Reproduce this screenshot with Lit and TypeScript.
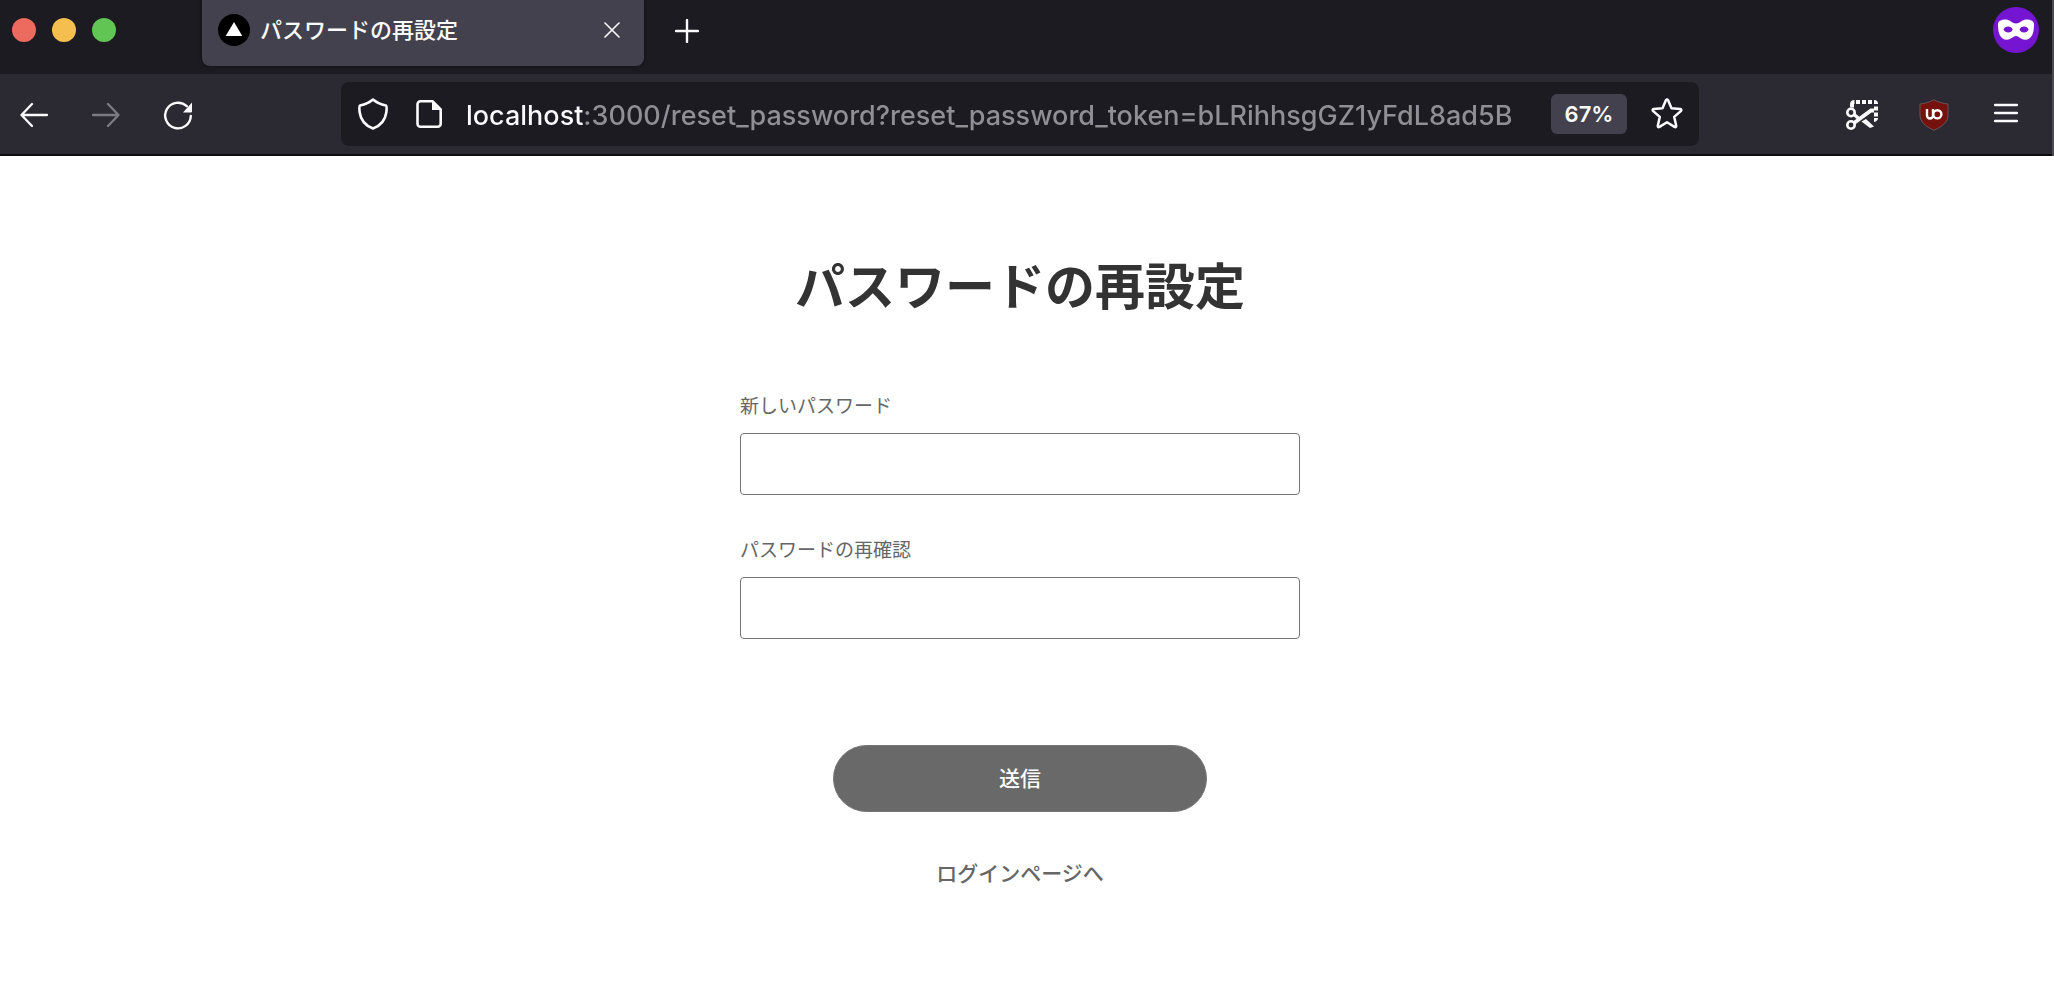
import { LitElement, html, css } from "lit";
import { customElement } from "lit/decorators.js";

const jpFonts = css`"Noto Sans CJK JP", "Noto Sans", sans-serif`;

@customElement("browser-tabs")
class BrowserTabs extends LitElement {
  static styles = css`
    :host {
      display: flex;
      align-items: flex-start;
      height: 74px;
      background: #1c1b22;
      font-family: Inter, ${jpFonts};
    }
    .lights {
      display: flex;
      gap: 16px;
      padding: 18px 86px 0 12px;
    }
    .light {
      width: 24px;
      height: 24px;
      padding: 0;
      border: 0;
      border-radius: 50%;
    }
    .red { background: #ed6a5e; }
    .yellow { background: #f5bf4f; }
    .green { background: #61c554; }
    .tab {
      display: flex;
      align-items: center;
      box-sizing: border-box;
      width: 442px;
      height: 66px;
      padding: 0 16px 6px;
      gap: 10px;
      background: #42414d;
      border-radius: 0 0 8px 8px;
      box-shadow: 0 0 4px rgba(0, 0, 0, 0.5);
      color: #fbfbfe;
    }
    .title {
      flex: 1;
      font-size: 22px;
      font-weight: 500;
      line-height: 32px;
      white-space: nowrap;
    }
    .icon-button {
      display: grid;
      place-items: center;
      width: 32px;
      height: 32px;
      padding: 0;
      border: 0;
      background: none;
      color: #fbfbfe;
    }
    .add { margin: 15px 0 0 27px; }
    svg { display: block; }
    .private { margin: 7px 13px 0 auto; }
  `;

  render() {
    return html`
      <div class="lights">
        <button class="light red" aria-label="Close window"></button>
        <button class="light yellow" aria-label="Minimize window"></button>
        <button class="light green" aria-label="Zoom window"></button>
      </div>
      <div class="tab">
        <svg width="32" height="32" viewBox="0 0 32 32">
          <circle cx="16" cy="16" r="16" fill="#000" />
          <path d="M16 8 24.300 22H7.700Z" fill="#fff" />
        </svg>
        <span class="title">パスワードの再設定</span>
        <button class="icon-button" aria-label="Close tab">
          <svg width="16" height="16" viewBox="0 0 16 16" fill="none" stroke="currentColor" stroke-width="1.600" stroke-linecap="round">
            <path d="M1 1l14 14M15 1 1 15" />
          </svg>
        </button>
      </div>
      <button class="icon-button add" aria-label="New tab">
        <svg width="24" height="24" viewBox="0 0 24 24" fill="none" stroke="currentColor" stroke-width="2.400" stroke-linecap="round">
          <path d="M12 1v22M1 12h22" />
        </svg>
      </button>
      <svg class="private" width="46" height="46" viewBox="0 0 46 46">
        <circle cx="23" cy="23" r="23" fill="#7615d1" />
        <path
          fill="#fff"
          fill-rule="evenodd"
          d="M5 17c0-3 3-4.500 8-4.500 4 0 6 4 10 4s6-4 10-4c5 0 8 1.500 8 4.500 0 9-2 15.700-9 15.700-4.500 0-6-3.700-9-3.700s-4.500 3.700-9 3.700C7 32.700 5 26 5 17Zm5.500 5.500c1 2 2.500 3 4.800 3s3.700-1 4.400-3c-.9-2-2.300-3-4.600-3s-3.800 1-4.600 3Zm16 0c.7 2 2.200 3 4.500 3s3.800-1 4.600-3c-.8-2-2.300-3-4.600-3s-3.700 1-4.500 3Z"
        />
      </svg>
    `;
  }
}

@customElement("browser-toolbar")
class BrowserToolbar extends LitElement {
  static styles = css`
    :host {
      display: flex;
      align-items: center;
      box-sizing: border-box;
      height: 82px;
      padding: 0 14px 0 2px;
      background: #2b2a33;
      border-bottom: 2px solid #0c0c0d;
      font-family: Inter, ${jpFonts};
    }
    .group {
      display: flex;
      gap: 8px;
    }
    .tool {
      display: grid;
      place-items: center;
      width: 64px;
      height: 64px;
      padding: 2px 0 0;
      border: 0;
      background: none;
      color: #fbfbfe;
    }
    .tool:disabled { color: #7c7b82; }
    .spacer { flex: 131; }
    .address {
      flex: 1326;
      display: flex;
      align-items: center;
      box-sizing: border-box;
      height: 64px;
      padding: 0 16px;
      background: #1c1b22;
      border-radius: 8px;
      color: #fbfbfe;
    }
    .plain {
      display: block;
      padding: 0;
      border: 0;
      background: none;
      color: inherit;
    }
    .page { margin: 0 24px 0 27px; }
    .url {
      flex: 1;
      min-width: 0;
      height: 40px;
      padding: 2px 0 0;
      box-sizing: border-box;
      border: 0;
      outline: 0;
      font: 500 27px/38px Inter, sans-serif;
      color: transparent;
      background: linear-gradient(to right, #fbfbfe 119px, #8f8f94 119px);
      background-clip: text;
      -webkit-background-clip: text;
    }
    .zoom {
      width: 76px;
      height: 40px;
      margin: 0 24px;
      padding: 0;
      border: 0;
      border-radius: 6px;
      background: #42414d;
      color: #fbfbfe;
      font: 600 22px/40px Inter, sans-serif;
    }
    svg { display: block; }
  `;

  render() {
    return html`
      <div class="group">
        <button class="tool" aria-label="Back">
          <svg width="32" height="32" viewBox="0 0 32 32" fill="none" stroke="currentColor" stroke-width="2.300" stroke-linecap="round" stroke-linejoin="round">
            <path d="M29 16H3.500M14 5 3.500 16 14 27" />
          </svg>
        </button>
        <button class="tool" aria-label="Forward" disabled>
          <svg width="32" height="32" viewBox="0 0 32 32" fill="none" stroke="currentColor" stroke-width="2.300" stroke-linecap="round" stroke-linejoin="round">
            <path d="M3 16h25.500M18 5l10.500 11L18 27" />
          </svg>
        </button>
        <button class="tool" aria-label="Reload">
          <svg width="32" height="32" viewBox="0 0 32 32" fill="none" stroke="currentColor" stroke-width="2.400" stroke-linecap="round">
            <path d="M28.800 17a12.800 12.800 0 1 1-4-9.800" />
            <path d="M30 4.500v8a1 1 0 0 1-1 1h-8L30 3.500Z" fill="currentColor" stroke="none" />
          </svg>
        </button>
      </div>
      <div class="spacer"></div>
      <div class="address">
        <button class="plain" aria-label="Tracking protection">
          <svg width="32" height="32" viewBox="0 0 32 32" fill="none" stroke="currentColor" stroke-width="2.600" stroke-linejoin="round">
            <path d="M16 1.500c4 3.500 8.500 5 13 6 1 1 .7 4 .3 7C28.300 22 24 27.500 16 30.500 8 27.500 3.700 22 2.700 14.500c-.4-3-.7-6 .3-7 4.500-1 9-2.500 13-6Z" />
          </svg>
        </button>
        <button class="plain page" aria-label="Site information">
          <svg width="26" height="28" viewBox="0 0 26 28" fill="none" stroke="currentColor" stroke-width="2.600" stroke-linejoin="round">
            <path d="M4.500 1.300h12.200l8 8v14.400a3 3 0 0 1-3 3H4.500a3 3 0 0 1-3-3V4.300a3 3 0 0 1 3-3Z" />
            <path d="M16 1v9h9Z" fill="currentColor" stroke="none" />
          </svg>
        </button>
        <input
          class="url"
          type="text"
          aria-label="Address"
          value="localhost:3000/reset_password?reset_password_token=bLRihhsgGZ1yFdL8ad5B"
        />
        <button class="zoom">67%</button>
        <button class="plain" aria-label="Bookmark">
          <svg width="32" height="32" viewBox="0 0 32 32" fill="none" stroke="currentColor" stroke-width="2.500" stroke-linejoin="round">
            <path d="M14.900 2.300q1.100-1.600 2.200 0l3.400 8 8.700.8q2 .4.600 2l-6.600 5.800 2 8.800q.2 2-1.700 1.200L16 24.200l-7.500 4.700q-1.900.8-1.700-1.200l2-8.800-6.600-5.800q-1.400-1.600.6-2l8.700-.8Z" />
          </svg>
        </button>
      </div>
      <div class="spacer"></div>
      <div class="group">
        <button class="tool" aria-label="Screenshot">
          <svg width="32" height="32" viewBox="0 0 32 32" fill="none" stroke="currentColor">
            <path d="M4 5.500Q4 1 8.500 1V5H8v3.500H4Z" fill="currentColor" stroke="none" />
            <path d="M10 3h4M16 3h4M22 3h4" stroke-width="4" />
            <path d="M28 1q4 0 4 4h-4ZM28 7.500h4v4h-4ZM28 13.500h4v4h-4ZM28 19h4q0 3-4 4Z" fill="currentColor" stroke="none" />
            <circle cx="5" cy="13.500" r="3.700" stroke-width="2.600" />
            <circle cx="5" cy="26" r="3.700" stroke-width="2.600" />
            <path d="M8 24 25 11.500h3" stroke-width="3.800" />
            <path d="m8 15.500 6 5" stroke-width="3.500" />
            <path d="M15.500 22.500 20 20l8 7.500-4 1.500Z" fill="currentColor" stroke="none" />
          </svg>
        </button>
        <button class="tool" aria-label="uBlock Origin">
          <svg width="32" height="32" viewBox="0 0 32 32">
            <path d="M16 .7c4.500 2.600 9 3.800 14 4.300v10.500C30 23 25 27 16 31.300 7 27 2 23 2 15.500V5C7 4.500 11.500 3.300 16 .7Z" fill="#77110d" stroke="#69545a" />
            <g fill="none" stroke="#fff" stroke-width="2.400">
              <path d="M9 10v6.500a3 3 0 0 0 3 3 3 3 0 0 0 3-3V10" />
              <circle cx="19.300" cy="15.300" r="4.100" />
            </g>
          </svg>
        </button>
        <button class="tool" aria-label="Menu">
          <svg width="24" height="24" viewBox="0 0 24 24" fill="none" stroke="currentColor" stroke-width="2.300" stroke-linecap="round">
            <path d="M1 2h22M1 10h22M1 18h22" />
          </svg>
        </button>
      </div>
    `;
  }
}

@customElement("reset-password-form")
class ResetPasswordForm extends LitElement {
  static styles = css`
    :host {
      display: block;
      padding: 91px 14px 60px 0;
      background: #fff;
      color: #666;
      font-family: ${jpFonts};
    }
    h1 {
      margin: 0;
      color: #333;
      font-size: 50px;
      font-weight: 700;
      line-height: 72px;
      text-align: center;
    }
    form {
      display: flex;
      flex-direction: column;
      gap: 40px;
      max-width: 560px;
      margin: 72px auto 0;
    }
    .field {
      display: flex;
      flex-direction: column;
      gap: 14px;
    }
    label {
      font-size: 19px;
      line-height: 28px;
    }
    input {
      box-sizing: border-box;
      width: 100%;
      height: 62px;
      padding: 0 16px;
      border: 1px solid #767676;
      border-radius: 4px;
      background: #fff;
      font: 400 21px/32px ${jpFonts};
    }
    .submit {
      align-self: center;
      width: 374px;
      height: 67px;
      margin-top: 66px;
      padding: 0 0 4px;
      border: 1px solid #767676;
      border-radius: 34px;
      background: #696969;
      color: #fff;
      font: 500 21px/32px ${jpFonts};
    }
    .login {
      align-self: center;
      margin-top: 4px;
      color: #666;
      font-size: 21px;
      font-weight: 500;
      line-height: 32px;
      text-decoration: none;
    }
  `;

  render() {
    return html`
      <h1>パスワードの再設定</h1>
      <form @submit=${(e: Event) => e.preventDefault()}>
        <div class="field">
          <label for="password">新しいパスワード</label>
          <input id="password" type="password" autocomplete="new-password" />
        </div>
        <div class="field">
          <label for="confirm">パスワードの再確認</label>
          <input id="confirm" type="password" autocomplete="new-password" />
        </div>
        <button class="submit" type="submit">送信</button>
        <a class="login" href="#login">ログインページへ</a>
      </form>
    `;
  }
}

@customElement("app-root")
class AppRoot extends LitElement {
  static styles = css`
    :host {
      display: block;
      min-height: 100vh;
      background: #fff;
    }
    header {
      border-right: 2px solid #4b4a50;
      background: #1c1b22;
    }
  `;

  render() {
    return html`
      <header>
        <browser-tabs></browser-tabs>
        <browser-toolbar></browser-toolbar>
      </header>
      <main><reset-password-form></reset-password-form></main>
    `;
  }
}
